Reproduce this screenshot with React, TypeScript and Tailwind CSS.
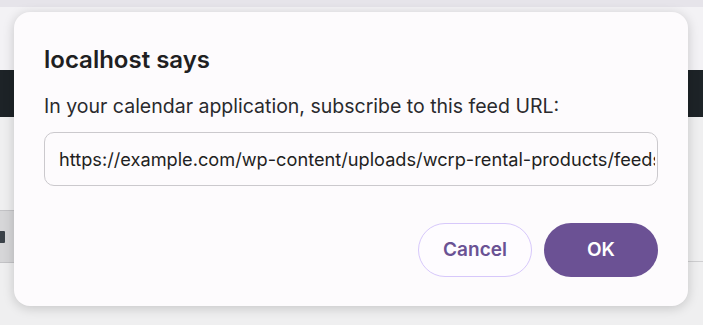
export default function App() {
  return (
    <div
      className="relative w-[703px] h-[325px] overflow-hidden bg-[#efeff0]"
      style={{ fontFamily: 'Inter, "Noto Sans", sans-serif' }}
    >
      {/* Page behind the dialog */}
      <div className="flex flex-col h-full">
        <div className="h-[7px] bg-[#e6e4ea]" />
        <div className="h-[63px] bg-[#f3f2f5]" />
        <div className="h-[47px] bg-[#1d2327]" />
        <div className="flex flex-1 justify-between">
          <div className="flex flex-col w-[14px]">
            <div className="h-[93px]" />
            <div className="h-[53px] flex items-center bg-[#d6d6d8] border-y border-[#c3c3c6]">
              <div className="w-[5px] h-[12px] bg-[#3c434a] rounded-r-[1px]" />
            </div>
          </div>
          <div className="flex flex-col w-[20px]">
            <div className="h-[145px] border-b border-[#cfcfd1]" />
          </div>
        </div>
      </div>

      {/* Dialog */}
      <div className="absolute left-[14px] top-[12px] w-[674px] h-[294px] rounded-[16px] bg-[#fdfbfd] shadow-[0_2px_12px_rgba(0,0,0,0.18)] px-[30px] pt-[34px] flex flex-col">
        <h1 className="text-[24px] leading-[28px] font-semibold text-[#1f1f22]">
          localhost says
        </h1>
        <p className="mt-[20px] text-[19.5px] leading-[24px] text-[#2a2a2d]">
          In your calendar application, subscribe to this feed URL:
        </p>
        <input
          readOnly
          value="https://example.com/wp-content/uploads/wcrp-rental-products/feeds/calendar.ics"
          className="mt-[14px] h-[54px] shrink-0 w-full rounded-[10px] border border-[#cbc9cd] bg-[#fdfbfd] pl-[14px] pr-[2px] text-[18.2px] text-[#1f1f22] outline-none"
          style={{ fontFamily: 'Inter, "Noto Sans", sans-serif' }}
        />
        <div className="mt-[37px] flex justify-end gap-[12px]">
          <button className="w-[114px] h-[54px] rounded-full border-[1.5px] border-[#d7c8fb] bg-[#fefcff] text-[19px] font-semibold text-[#6a5294]">
            Cancel
          </button>
          <button className="w-[114px] h-[54px] rounded-full bg-[#6b5194] text-[19px] font-semibold text-white">
            OK
          </button>
        </div>
      </div>
    </div>
  );
}
